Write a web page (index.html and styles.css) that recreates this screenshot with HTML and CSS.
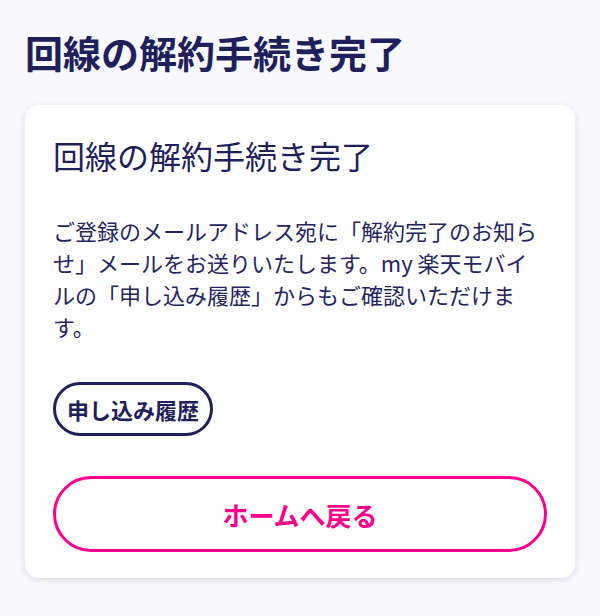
FILE: index.html
```html
<!DOCTYPE html>
<html lang="ja">
<head>
<meta charset="utf-8">
<title>回線の解約手続き完了</title>
<link rel="stylesheet" href="styles.css">
</head>
<body>
<main class="page">
  <h1 class="page-title">回線の解約手続き完了</h1>
  <section class="card">
    <h2 class="card-title">回線の解約手続き完了</h2>
    <p class="card-text">ご登録のメールアドレス宛に「解約完了のお知らせ」メールをお送りいたします。my 楽天モバイルの「申し込み履歴」からもご確認いただけます。</p>
    <div class="link-row">
      <a class="pill" href="#">申し込み履歴</a>
    </div>
    <a class="home-btn" href="#">ホームへ戻る</a>
  </section>
</main>
</body>
</html>
```
FILE: styles.css
```css
* { box-sizing: border-box; }
html, body { margin: 0; padding: 0; }
body {
  background: #f8f8fd;
  font-family: "Noto Sans CJK JP", "Noto Sans", sans-serif;
  color: #1f1f5c;
}
.page {
  padding: 26px 25px 30px;
}
.page-title {
  margin: 0;
  font-size: 38px;
  line-height: 52px;
  font-weight: 700;
  color: #1f1f5c;
}
.card {
  margin-top: 27px;
  background: #ffffff;
  border-radius: 14px;
  box-shadow: 0 2px 6px rgba(30, 30, 80, 0.14);
  padding: 28px 28px 26px;
  display: flex;
  flex-direction: column;
}
.card-title {
  margin: 0;
  font-size: 32px;
  line-height: 44px;
  font-weight: 400;
}
.card-text {
  margin: 37px 0 0;
  font-size: 22px;
  line-height: 32px;
  color: #25255f;
}
.link-row {
  margin-top: 40px;
  display: flex;
}
.pill {
  display: inline-block;
  border: 3px solid #1f1f5c;
  border-radius: 999px;
  padding: 8px 11px;
  font-size: 22px;
  line-height: 32px;
  font-weight: 700;
  color: #1f1f5c;
  text-decoration: none;
}
.home-btn {
  margin-top: 40px;
  display: flex;
  align-items: center;
  justify-content: center;
  height: 76px;
  border: 3px solid #ff008c;
  border-radius: 999px;
  font-size: 26px;
  font-weight: 700;
  color: #ff008c;
  text-decoration: none;
}
```
